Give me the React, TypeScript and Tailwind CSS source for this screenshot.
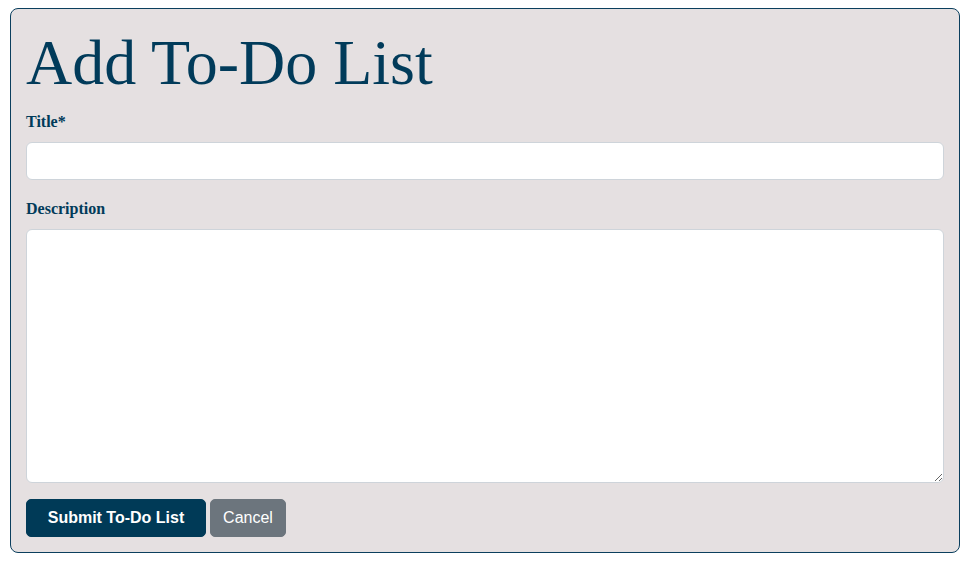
export default function App() {
  return (
    <div className="pt-[8px] pl-[10px]">
      <div className="w-[950px] h-[545px] rounded-[8px] border border-[#0b3f5e] bg-[#e5e0e1] p-[15px] pt-[16px] font-['Liberation_Serif',serif] text-[#013b5a]">
        <h1 className="text-[64px] leading-[1.2] font-normal mb-[8px]">Add To-Do List</h1>
        <form>
          <div className="mb-[17px]">
            <label className="block text-[16px] leading-[1.5] font-bold mb-[8px]">Title*</label>
            <input
              type="text"
              className="block w-full h-[38px] rounded-[6px] border border-[#ced4da] bg-white px-[12px] text-[16px] outline-none"
            />
          </div>
          <div className="mb-[16px]">
            <label className="block text-[16px] leading-[1.5] font-bold mb-[8px]">Description</label>
            <textarea className="block w-full h-[254px] rounded-[6px] border border-[#ced4da] bg-white px-[12px] py-[6px] text-[16px] outline-none" />
          </div>
          <div className="flex gap-[4px] font-['Liberation_Sans',Arial,sans-serif] text-[16px]">
            <button
              type="button"
              className="h-[38px] w-[180px] rounded-[5px] border border-[#003a57] bg-[#003a57] font-bold text-white"
            >
              Submit To-Do List
            </button>
            <button
              type="button"
              className="h-[38px] w-[76px] rounded-[5px] border border-[#6c757d] bg-[#6c757d] text-white"
            >
              Cancel
            </button>
          </div>
        </form>
      </div>
    </div>
  );
}
